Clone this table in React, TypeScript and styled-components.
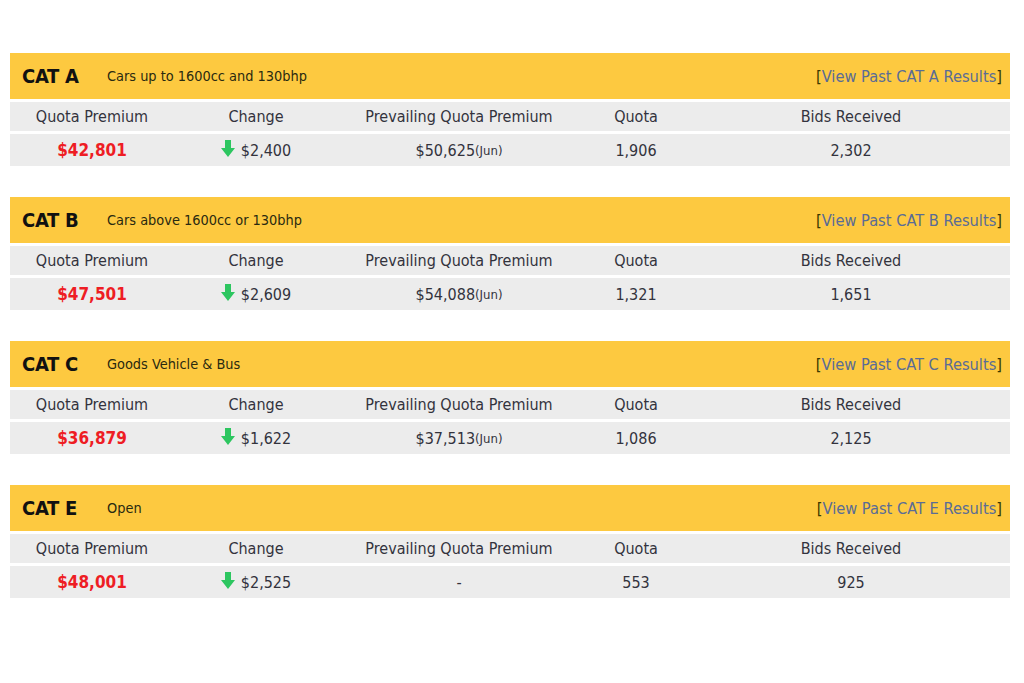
import styled, { createGlobalStyle } from 'styled-components'

const GlobalStyle = createGlobalStyle`
  body {
    margin: 0;
    background: #fff;
    font-family: "DejaVu Sans Condensed", "DejaVu Sans", sans-serif;
    color: #33333d;
  }
`

const Page = styled.main`
  padding: 53px 14px 0 10px;
  display: flex;
  flex-direction: column;
  gap: 31px;
`

const Block = styled.section`
  display: flex;
  flex-direction: column;
  gap: 3px;
`

const Header = styled.header`
  height: 46px;
  background: #fdc940;
  display: flex;
  align-items: center;
  padding: 0 8px 0 12px;
`

const CatName = styled.h2`
  margin: 0;
  width: 85px;
  font-size: 20px;
  font-weight: bold;
  color: #111;
  letter-spacing: -0.3px;
`

const CatDesc = styled.span`
  flex: 1;
  font-size: 14.4px;
  color: #2a2a10;
`

const PastLink = styled.span`
  font-size: 16.3px;
  color: #3a3a00;

  & > a {
    color: #5a6c96;
    text-decoration: none;
  }
`

const Row = styled.div<{ $tall?: boolean }>`
  display: grid;
  grid-template-columns: 164px 164px 242px 112px 318px;
  height: ${(p) => (p.$tall ? 32 : 29)}px;
  align-items: center;
  background: #ececec;
  font-size: 16px;
  text-align: center;
`

const Cell = styled.div`
  display: flex;
  justify-content: center;
  align-items: center;
`

const Price = styled(Cell)`
  color: #ee1d24;
  font-weight: bold;
  font-size: 17px;
`

const Month = styled.small`
  font-size: 13px;
`

const Arrow = () => (
  <svg width="14" height="17" viewBox="0 0 14 17" style={{ marginRight: 6, marginTop: -3 }}>
    <path d="M4 0h6v8h4l-7 9-7-9h4z" fill="#2dc660" />
  </svg>
)

const data = [
  { cat: 'A', desc: 'Cars up to 1600cc and 130bhp', premium: '$42,801', change: '$2,400', prev: '$50,625', quota: '1,906', bids: '2,302' },
  { cat: 'B', desc: 'Cars above 1600cc or 130bhp', premium: '$47,501', change: '$2,609', prev: '$54,088', quota: '1,321', bids: '1,651' },
  { cat: 'C', desc: 'Goods Vehicle & Bus', premium: '$36,879', change: '$1,622', prev: '$37,513', quota: '1,086', bids: '2,125' },
  { cat: 'E', desc: 'Open', premium: '$48,001', change: '$2,525', prev: '', quota: '553', bids: '925' },
]

export default function App() {
  return (
    <>
      <GlobalStyle />
      <Page>
        {data.map((d) => (
          <Block key={d.cat}>
            <Header>
              <CatName>CAT {d.cat}</CatName>
              <CatDesc>{d.desc}</CatDesc>
              <PastLink>
                [<a href="#">View Past CAT {d.cat} Results</a>]
              </PastLink>
            </Header>
            <Row>
              <Cell>Quota Premium</Cell>
              <Cell>Change</Cell>
              <Cell>Prevailing Quota Premium</Cell>
              <Cell>Quota</Cell>
              <Cell>Bids Received</Cell>
            </Row>
            <Row $tall>
              <Price>{d.premium}</Price>
              <Cell>
                <Arrow />
                {d.change}
              </Cell>
              <Cell>
                {d.prev ? (
                  <>
                    {d.prev}
                    <Month>(Jun)</Month>
                  </>
                ) : (
                  '-'
                )}
              </Cell>
              <Cell>{d.quota}</Cell>
              <Cell>{d.bids}</Cell>
            </Row>
          </Block>
        ))}
      </Page>
    </>
  )
}
